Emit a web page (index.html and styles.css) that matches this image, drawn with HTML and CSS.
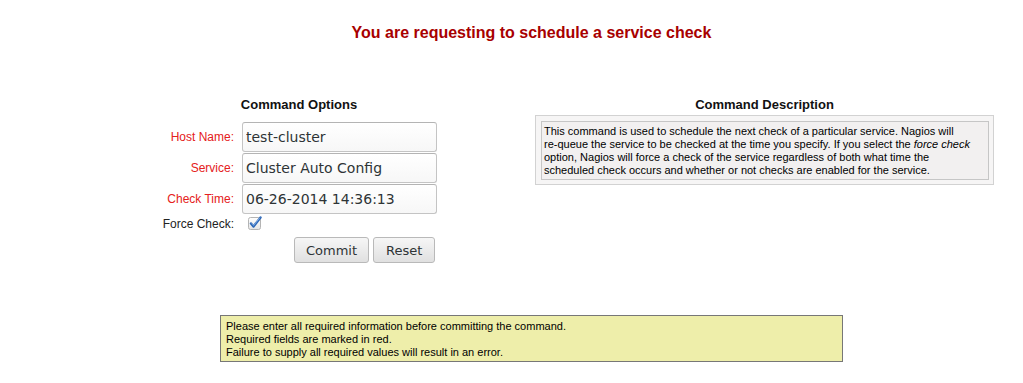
FILE: index.html
```html
<!DOCTYPE html>
<html lang="en">
  <head>
    <meta charset="UTF-8" />
    <title>External Command Interface</title>
    <link rel="stylesheet" href="styles.css">
  </head>
  <body>
    <div class="page">
      <h1 class="cmd-type">You are requesting to schedule a service check</h1>

      <div class="cmd-row">
        <div class="options">
          <h2 class="section-title">Command Options</h2>
          <form class="opt-form">
            <div class="field">
              <label class="req">Host Name:</label>
              <input class="text-input" type="text" value="test-cluster">
            </div>
            <div class="field">
              <label class="req">Service:</label>
              <input class="text-input" type="text" value="Cluster Auto Config">
            </div>
            <div class="field">
              <label class="req">Check Time:</label>
              <input class="text-input" type="text" value="06-26-2014 14:36:13">
            </div>
            <div class="field field--check">
              <label>Force Check:</label>
              <span class="check">
                <svg width="16" height="15" viewBox="0 0 16 15">
                  <defs>
                    <linearGradient id="boxFill" x1="0" y1="0" x2="0" y2="1">
                      <stop offset="0" stop-color="#ffffff" />
                      <stop offset="1" stop-color="#e4e4e4" />
                    </linearGradient>
                  </defs>
                  <rect x="0.5" y="2.5" width="12" height="12" rx="2" fill="url(#boxFill)" stroke="#b4b4b4" />
                  <path d="M3 8.5 L5.5 11.5 L12.5 2.5" fill="none" stroke="#2d68b8" stroke-width="2.4" stroke-linecap="round" stroke-linejoin="round" />
                  <path d="M4 8.6 L5.6 10.4 L11.6 3" fill="none" stroke="#8fb6e6" stroke-width="0.9" stroke-linecap="round" />
                </svg>
              </span>
            </div>
            <div class="actions">
              <button class="btn btn--commit" type="button">Commit</button>
              <button class="btn" type="reset">Reset</button>
            </div>
          </form>
        </div>

        <div class="description">
          <h2 class="section-title">Command Description</h2>
          <div class="desc-outer">
            <div class="desc-inner">
              This command is used to schedule the next check of a particular service. Nagios will
              <span class="nowrap">re-queue</span> the service to be checked at the time you specify. If you select the <i>force check</i>
              option, Nagios will force a check of the service regardless of both what time the
              scheduled check occurs and whether or not checks are enabled for the service.
            </div>
          </div>
        </div>
      </div>

      <div class="notice">
        Please enter all required information before committing the command.<br>
        Required fields are marked in red.<br>
        Failure to supply all required values will result in an error.
      </div>
    </div>
  </body>
</html>
```

FILE: styles.css
```css
html,
body {
  margin: 0;
  overflow: hidden;
  background: #fff;
}

body {
  font-family: "Liberation Sans", Arial, sans-serif;
  color: #000;
}

.page {
  width: 1063px;
  padding-top: 24px;
}

.cmd-type {
  margin: 0;
  text-align: center;
  font-size: 16px;
  line-height: 18px;
  font-weight: bold;
  color: #a80000;
}

.cmd-row {
  display: flex;
  margin-top: 55px;
  padding-left: 150px;
}

.section-title {
  margin: 0;
  text-align: center;
  font-size: 13px;
  line-height: 15px;
  font-weight: bold;
  color: #111;
}

/* options column */
.options {
  width: 298px;
}

.opt-form {
  margin-top: 10px;
  display: flex;
  flex-direction: column;
  gap: 1px;
}

.field {
  display: flex;
  align-items: center;
}

.field label {
  width: 84px;
  margin-right: 8px;
  text-align: right;
  font-size: 12px;
  color: #222;
}
.field label.req {
  color: #e52020;
}

.text-input {
  box-sizing: border-box;
  width: 195px;
  height: 30px;
  margin: 0;
  padding: 0 3px;
  font-family: "DejaVu Sans", sans-serif;
  font-size: 14px;
  color: #2e3436;
  background: linear-gradient(#ffffff, #f7f7f7);
  border: 1px solid #c4c4c4;
  border-top-color: #b4b4b4;
  border-radius: 3px;
  outline: none;
}

.field--check {
  height: 16px;
  margin-top: 1px;
}
.check {
  display: inline-block;
  margin-left: 6px;
  height: 15px;
  margin-top: -3px;
}

.actions {
  display: flex;
  gap: 4px;
  margin-top: 4px;
  padding-left: 144px;
}

.btn {
  box-sizing: border-box;
  height: 26px;
  margin: 0;
  padding: 0 12px;
  font-family: "DejaVu Sans", sans-serif;
  font-size: 13px;
  color: #2e3436;
  background: linear-gradient(#f6f6f6, #e0e0e0);
  border: 1px solid #b9b9b9;
  border-radius: 3px;
  cursor: pointer;
}
.btn--commit {
  padding: 0 11px;
}

/* description column */
.description {
  width: 459px;
  margin-left: 87px;
}

.desc-outer {
  box-sizing: border-box;
  margin-top: 3px;
  padding: 5px 4px 4px 5px;
  background: #f6f5f5;
  border: 1px solid #d2d2d2;
}

.desc-inner {
  padding: 3px 8px 2px 2px;
  font-size: 11px;
  line-height: 13px;
  background: #f2f0f0;
  border: 1px solid #c6c6c6;
}

.nowrap {
  white-space: nowrap;
}

.notice {
  box-sizing: border-box;
  width: 623px;
  margin: 52px auto 0;
  padding: 4px 5px 2px;
  font-size: 11px;
  line-height: 13px;
  background: #eeeeaa;
  border: 1px solid #777;
}
```
